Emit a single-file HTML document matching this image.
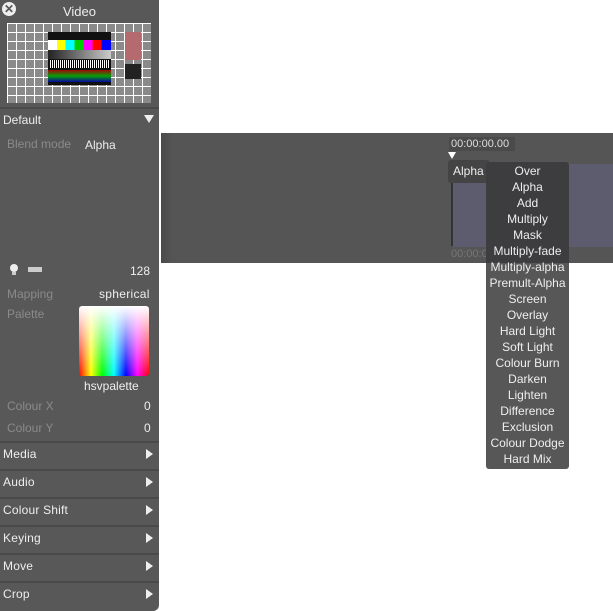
<!DOCTYPE html>
<html><head><style>
*{margin:0;padding:0;box-sizing:border-box}
body{width:613px;height:611px;background:#fff;position:relative;overflow:hidden;font-family:"Liberation Sans",sans-serif;font-size:12px;color:#eee}
.abs{position:absolute}
#panel{left:0;top:0;width:159px;height:611px;background:#585858;border-radius:0 0 6px 0}
.lbl{color:#8a8a8a}
.sec{position:absolute;left:0;width:159px;height:26px;border-top:2px solid #4a4a4a;padding:4px 3px;font-size:12px;letter-spacing:0.2px}
.sec .tri{position:absolute;right:6px;top:6px;width:0;height:0;border-left:7px solid #eee;border-top:5px solid transparent;border-bottom:5px solid transparent}
#menu div{height:16px;line-height:16px;text-align:center;white-space:nowrap}
</style></head><body>
<div id="panel" class="abs">
  <div class="abs" style="left:2px;top:2px;width:14px;height:14px;border-radius:50%;background:#eee;color:#585858;font-size:12px;line-height:14px;text-align:center;font-weight:bold">✕</div>
  <div class="abs" style="left:0;width:159px;top:4px;text-align:center;font-size:13px">Video</div>
  <div class="abs" style="left:7px;top:23px;width:144px;height:80px;background:#8a8a8a;
    background-image:linear-gradient(#fff 1px,transparent 1px),linear-gradient(90deg,#fff 1px,transparent 1px);background-size:9px 9px"></div>
  <div class="abs" style="left:48px;top:32px;width:63px;height:53px;background:#111"></div>
  <div class="abs" style="left:48px;top:40px;width:63px;height:10px;background:linear-gradient(90deg,#fff 14%,#ff0 14% 28%,#0ff 28% 42%,#0c0 42% 57%,#f0f 57% 71%,#f00 71% 85%,#00f 85%)"></div>
  <div class="abs" style="left:48px;top:50px;width:63px;height:9px;background:linear-gradient(90deg,#222,#ccc)"></div>
  <div class="abs" style="left:50px;top:60px;width:60px;height:8px;background:repeating-linear-gradient(90deg,#fff 0 1px,#000 1px 2px)"></div>
  <div class="abs" style="left:48px;top:70px;width:63px;height:12px;background:linear-gradient(#f00,#0f0,#00f);opacity:.6"></div>
  <div class="abs" style="left:125px;top:32px;width:16px;height:28px;background:#b56a70"></div>
  <div class="abs" style="left:125px;top:64px;width:16px;height:15px;background:#222"></div>
  <div class="abs" style="left:0;top:107px;width:159px;height:2px;background:#4a4a4a"></div>
  <div class="abs" style="left:3px;top:113px;font-size:12px">Default</div>
  <div class="abs" style="left:144px;top:115px;border-top:8px solid #eee;border-left:5px solid transparent;border-right:5px solid transparent"></div>
  <div class="abs lbl" style="left:7px;top:137px">Blend mode</div>
  <div class="abs" style="left:85px;top:138px">Alpha</div>
  <div class="abs" style="left:10px;top:264px;width:8px;height:8px;border-radius:50%;background:#eee"></div>
  <div class="abs" style="left:12px;top:272px;width:4px;height:3px;background:#ccc"></div>
  <div class="abs" style="left:28px;top:267px;width:14px;height:5px;background:#ccc"></div>
  <div class="abs" style="left:130px;top:264px">128</div>
  <div class="abs lbl" style="left:7px;top:287px">Mapping</div>
  <div class="abs" style="left:99px;top:287px;letter-spacing:0.3px">spherical</div>
  <div class="abs lbl" style="left:7px;top:307px">Palette</div>
  <div class="abs" style="left:79px;top:306px;width:70px;height:70px;border-radius:3px;background:linear-gradient(rgba(255,255,255,1),rgba(255,255,255,0)),linear-gradient(90deg,#f00,#ff0 17%,#0f0 33%,#0ff 50%,#00f 67%,#f0f 83%,#f00)"></div>
  <div class="abs" style="left:84px;top:379px">hsvpalette</div>
  <div class="abs lbl" style="left:7px;top:399px">Colour X</div>
  <div class="abs" style="left:144px;top:399px">0</div>
  <div class="abs lbl" style="left:7px;top:421px">Colour Y</div>
  <div class="abs" style="left:144px;top:421px">0</div>
  <div class="sec" style="top:441px">Media<span class="tri"></span></div>
  <div class="sec" style="top:469px">Audio<span class="tri"></span></div>
  <div class="sec" style="top:497px">Colour Shift<span class="tri"></span></div>
  <div class="sec" style="top:525px">Keying<span class="tri"></span></div>
  <div class="sec" style="top:553px">Move<span class="tri"></span></div>
  <div class="sec" style="top:581px;height:30px">Crop<span class="tri"></span></div>
</div>
<div class="abs" style="left:161px;top:133px;width:452px;height:130px;background:#555;border-radius:3px 0 0 3px"></div>
<div class="abs" style="left:161px;top:133px;width:12px;height:130px;background:linear-gradient(90deg,#4a4a4a,#555)"></div>
<div class="abs" style="left:449px;top:137px;width:66px;height:14px;background:#4a4a4a;border-radius:2px;color:#ddd;font-size:11px;padding-left:2px;line-height:14px">00:00:00.00</div>
<div class="abs" style="left:448px;top:152px;border-top:7px solid #fff;border-left:4px solid transparent;border-right:4px solid transparent"></div>
<div class="abs" style="left:453px;top:164px;width:160px;height:83px;background:#5d5b6e"></div>
<div class="abs" style="left:451px;top:160px;width:2px;height:86px;background:#333"></div>
<div class="abs" style="left:448px;top:160px;width:42px;height:23px;background:#444;border-radius:3px;padding:4px 0 0 5px">Alpha</div>
<div class="abs" style="left:451px;top:248px;color:#777;font-size:11px">00:00:0</div>
<div class="abs" style="left:486px;top:162px;width:83px;height:101px;background:#3d3d40;border-radius:3px 3px 0 0"></div>
<div class="abs" style="left:486px;top:263px;width:83px;height:206px;background:#575757;border-radius:0 0 3px 3px"></div>
<div id="menu" class="abs" style="left:486px;top:163px;width:83px">
<div>Over</div><div>Alpha</div><div>Add</div><div>Multiply</div><div>Mask</div><div>Multiply-fade</div><div>Multiply-alpha</div><div>Premult-Alpha</div><div>Screen</div><div>Overlay</div><div>Hard Light</div><div>Soft Light</div><div>Colour Burn</div><div>Darken</div><div>Lighten</div><div>Difference</div><div>Exclusion</div><div>Colour Dodge</div><div>Hard Mix</div>
</div>
</body></html>
